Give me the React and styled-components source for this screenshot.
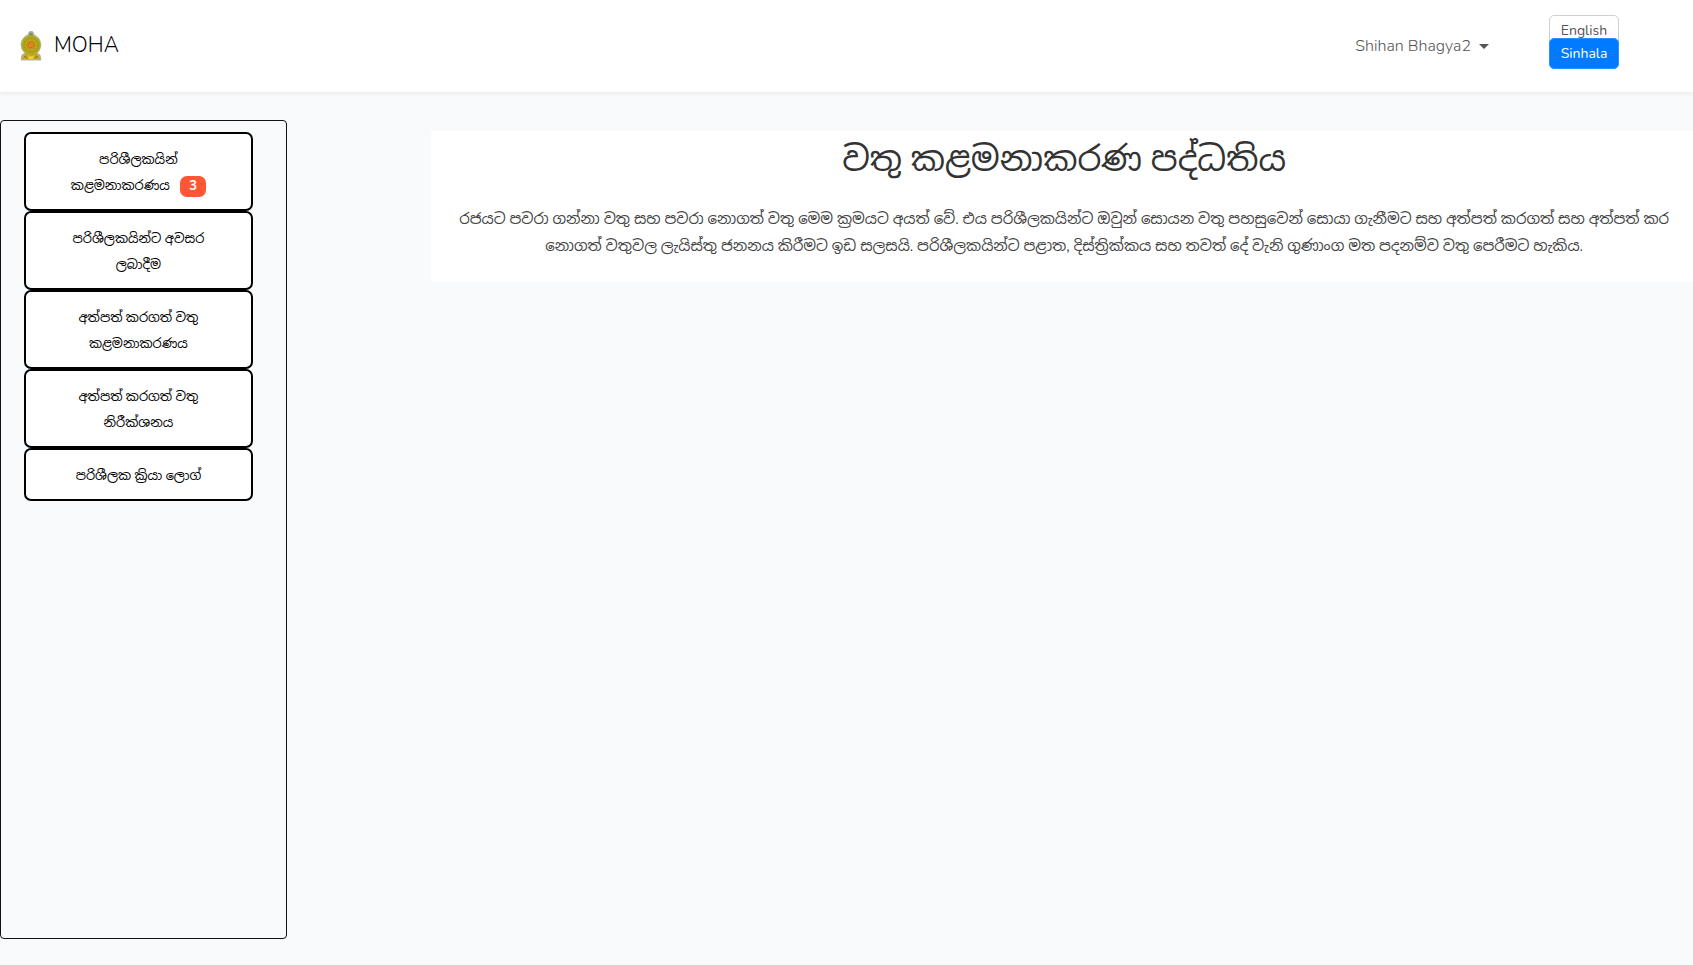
import React from "react";
import styled, { createGlobalStyle } from "styled-components";

const GlobalStyle = createGlobalStyle`
  *, *::before, *::after { box-sizing: border-box; }
  body {
    margin: 0;
    min-height: 100vh;
    background: #f8fafc;
    color: #212529;
    font-family: Nunito, "Noto Sans Sinhala", "Iskoola Pota", "Noto Sans", "Open Sans", sans-serif;
    font-size: 15px;
  }
`;

const Header = styled.header`
  display: flex;
  align-items: center;
  height: 92px;
  padding: 0 74px 0 20px;
  background: #fff;
  box-shadow: 0 2px 4px rgba(0, 0, 0, 0.06);
`;

const Brand = styled.a`
  display: flex;
  align-items: center;
  gap: 12px;
  margin-right: auto;
  color: #000;
  font-size: 21px;
  font-weight: 300;
  line-height: 28px;
  text-decoration: none;
`;

const BrandName = styled.span`
  padding-bottom: 2px;
`;

const UserMenu = styled.button`
  display: flex;
  align-items: center;
  gap: 8px;
  margin-right: 60px;
  padding: 0;
  border: 0;
  background: none;
  color: #555;
  font: inherit;
  font-size: 16px;
  font-weight: 300;
  line-height: 24px;
`;

const Caret = styled.span`
  border: 5px solid transparent;
  border-top-color: #555;
  border-bottom: 0;
`;

const LanguageGroup = styled.div`
  display: flex;
  flex-direction: column;
  width: 70px;
  margin-bottom: 8px;
`;

const LanguageButton = styled.button`
  height: 31px;
  padding: 0;
  border: 1px solid ${(p) => (p.$active ? "#2f8fff" : "#ced0d2")};
  border-radius: 5px;
  background: ${(p) => (p.$active ? "#007bff" : "#fff")};
  color: ${(p) => (p.$active ? "#fff" : "#555")};
  font: inherit;
  font-size: 14px;
  line-height: 20px;

  & + & { margin-top: -8px; }
`;

const Layout = styled.div`
  display: flex;
  align-items: flex-start;
  padding-top: 28px;
`;

const Sidebar = styled.nav`
  display: flex;
  flex-direction: column;
  flex: 0 0 calc(17% - 1px);
  height: calc(100vh - 146px);
  padding: 11px 33px 11px 23px;
  border: 1px solid #111;
  border-radius: 4px;
`;

const SideButton = styled.button`
  padding: 13px 32px 10px;
  border: 2px solid #000;
  border-radius: 7px;
  background: #fff;
  color: #000;
  font: inherit;
  font-size: 13px;
  line-height: 26px;
`;

const Badge = styled.span`
  display: inline-block;
  margin-left: 7px;
  padding: 0 9px;
  border-radius: 7px;
  background: #ff5733;
  color: #fff;
  font-weight: 700;
  line-height: 21px;
`;

const Main = styled.main`
  flex: 1;
  margin: 11px 0 0 calc(8% + 9px);
  padding: 7px 18px 22px 22px;
  background: #fff;
  color: #333;
  text-align: center;
`;

const Title = styled.h1`
  margin: 0 0 24px;
  font-size: 34px;
  font-weight: 400;
  line-height: 44px;
`;

const Intro = styled.p`
  margin: 0;
  color: #444;
  font-size: 15px;
  line-height: 27px;
`;

const Emblem = () => (
  <svg width="22" height="30" viewBox="0 0 22 30" aria-hidden="true">
    <path d="M8 4 L9 1 Q11 -1 13 1 L14 4 Q20 6 21 14 Q20 20 17 22 L20 24 L21 29 H1 L2 24 L5 22 Q1 19 1 13 Q2 6 8 4Z" fill="#b9b26f" stroke="#b8b7a0" />
    <path d="M9 3 Q11 0 13 3 L12 6 H10Z" fill="#858a78" />
    <circle cx="11" cy="14" r="9.5" fill="#b0a91d" />
    <circle cx="11" cy="14" r="7" fill="none" stroke="#8f941d" strokeDasharray="2 1" />
    <circle cx="11" cy="14" r="4.5" fill="#d68b16" />
    <circle cx="11" cy="14" r="2.8" fill="#c95d12" />
    <path d="M9 14 Q10 12 13 13 M9 15 H13" stroke="#f2b83a" fill="none" />
    <path d="M5 23 L8 22 H14 L17 23 L20 28 H2Z" fill="#c4a61c" />
    <path d="M8 24 Q11 27 14 24 L13 28 H9Z" fill="#eadc20" />
    <path d="M4 25 L7 27 M18 25 L15 27" stroke="#9a6a24" />
  </svg>
);

const items = [
  { label: "පරිශීලකයින් කළමනාකරණය", count: 3 },
  { label: "පරිශීලකයින්ට අවසර ලබාදීම" },
  { label: "අත්පත් කරගත් වතු කළමනාකරණය" },
  { label: "අත්පත් කරගත් වතු නිරීක්ශනය" },
  { label: "පරිශීලක ක්‍රියා ලොග්" },
];

export default function App() {
  return (
    <>
      <GlobalStyle />
      <Header>
        <Brand href="#">
          <Emblem />
          <BrandName>MOHA</BrandName>
        </Brand>
        <UserMenu type="button" aria-haspopup="menu">
          Shihan Bhagya2
          <Caret />
        </UserMenu>
        <LanguageGroup>
          <LanguageButton type="button">English</LanguageButton>
          <LanguageButton type="button" $active>Sinhala</LanguageButton>
        </LanguageGroup>
      </Header>
      <Layout>
        <Sidebar>
          {items.map((item) => (
            <SideButton type="button" key={item.label}>
              {item.label} {item.count && <Badge>{item.count}</Badge>}
            </SideButton>
          ))}
        </Sidebar>
        <Main>
          <Title>වතු කළමනාකරණ පද්ධතිය</Title>
          <Intro>
            රජයට පවරා ගන්නා වතු සහ පවරා නොගත් වතු මෙම ක්‍රමයට අයත් වේ. එය පරිශීලකයින්ට ඔවුන් සොයන වතු පහසුවෙන් සොයා ගැනීමට සහ අත්පත් කරගත් සහ අත්පත් කර නොගත් වතුවල ලැයිස්තු ජනනය කිරීමට ඉඩ සලසයි. පරිශීලකයින්ට පළාත, දිස්ත්‍රික්කය සහ තවත් දේ වැනි ගුණාංග මත පදනම්ව වතු පෙරීමට හැකිය.
          </Intro>
        </Main>
      </Layout>
    </>
  );
}
